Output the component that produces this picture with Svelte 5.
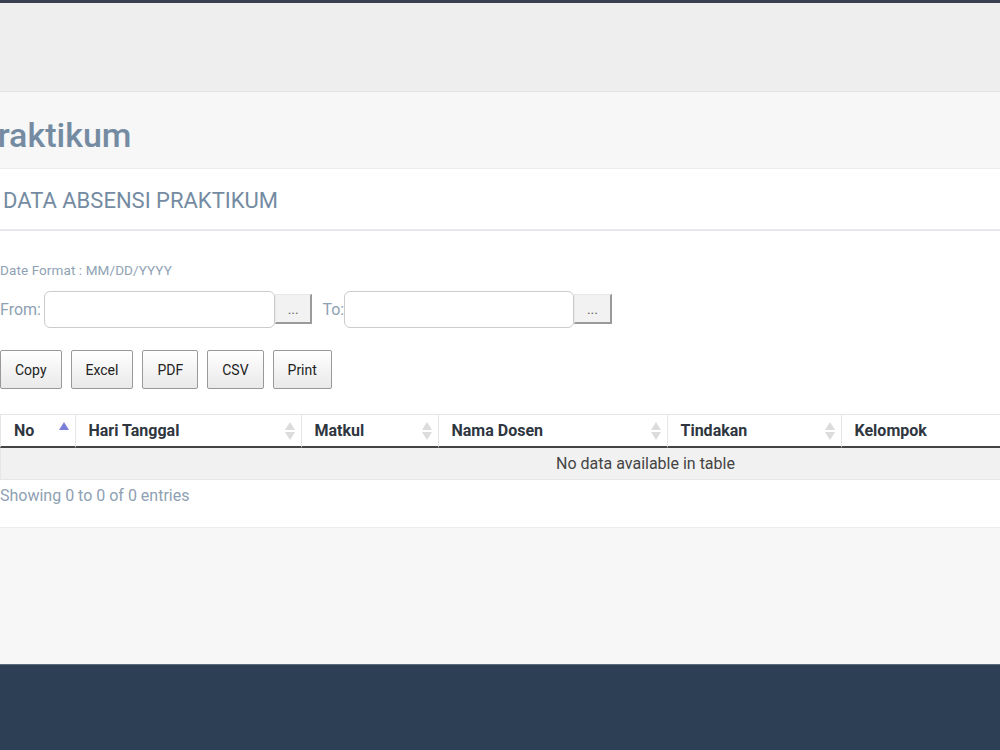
<script lang="ts">
  const columns = [
    { name: 'No', width: 75, sort: 'asc' },
    { name: 'Hari Tanggal', width: 226, sort: 'both' },
    { name: 'Matkul', width: 137, sort: 'both' },
    { name: 'Nama Dosen', width: 229, sort: 'both' },
    { name: 'Tindakan', width: 174, sort: 'both' },
    { name: 'Kelompok', width: 449, sort: 'both' }
  ];
  const exportButtons = ['Copy', 'Excel', 'PDF', 'CSV', 'Print'];
</script>

<div class="page">
  <div class="topbar"></div>
  <div class="header"></div>

  <div class="content">
    <div class="title-bar">
      <h1>Praktikum</h1>
    </div>

    <div class="card">
      <div class="card-head">DATA ABSENSI PRAKTIKUM</div>
      <div class="card-body">
        <p class="format">Date Format : MM/DD/YYYY</p>

        <div class="range">
          <label for="from">From:</label>
          <input id="from" type="text" />
          <button class="pick">...</button>
          <label class="to" for="to">To:</label>
          <input id="to" type="text" />
          <button class="pick">...</button>
        </div>

        <div class="exports">
          {#each exportButtons as label}
            <button class="export">{label}</button>
          {/each}
        </div>

        <table>
          <thead>
            <tr>
              {#each columns as col}
                <th style:width="{col.width}px">
                  {col.name}
                  <span class="sort">
                    <i class="up" class:active={col.sort === 'asc'}></i>
                    {#if col.sort === 'both'}<i class="down"></i>{/if}
                  </span>
                </th>
              {/each}
            </tr>
          </thead>
          <tbody>
            <tr>
              <td colspan="6">No data available in table</td>
            </tr>
          </tbody>
        </table>

        <div class="info">Showing 0 to 0 of 0 entries</div>
      </div>
    </div>
  </div>

  <div class="footer"></div>
</div>

<style>
  :global(body) {
    margin: 0;
    overflow: hidden;
    font-family: Roboto, "Liberation Sans", sans-serif;
  }
  .page {
    width: 1000px;
    height: 750px;
    display: flex;
    flex-direction: column;
    overflow: hidden;
    background: #f7f7f7;
  }
  .topbar {
    height: 3px;
    background: #3a3f51;
  }
  .header {
    height: 88px;
    background: #eeeeee;
    border-bottom: 1px solid #e2e2e4;
  }
  .content {
    flex: 1;
  }
  .title-bar {
    height: 76px;
    box-sizing: border-box;
    padding-top: 10px;
    display: flex;
    align-items: center;
    background: #f7f7f7;
  }
  h1 {
    margin: 0 0 0 -24px;
    font-size: 34px;
    font-weight: 500;
    color: #748ba2;
  }
  .card {
    background: #fff;
    border-top: 1px solid #e9edf0;
    border-bottom: 1px solid #e9edf0;
    height: 360px;
    box-sizing: border-box;
    overflow: hidden;
  }
  .card-head {
    height: 62px;
    box-sizing: border-box;
    padding: 19px 0 0 3px;
    font-size: 22px;
    line-height: 26px;
    color: #748ba2;
    border-bottom: 2px solid #e6e8ee;
  }
  .card-body {
    padding-top: 31px;
  }
  .format {
    margin: 0;
    font-size: 13.5px;
    line-height: 16px;
    letter-spacing: 0.1px;
    color: #8fa2b4;
  }
  .range {
    display: flex;
    align-items: center;
    margin-top: 12px;
    height: 38px;
    font-size: 16px;
    color: #8ea1b3;
  }
  .range label {
    margin-right: 3px;
  }
  .range .to {
    margin: 0;
    padding-left: 10px;
  }
  input {
    width: 231px;
    height: 37px;
    box-sizing: border-box;
    border: 1px solid #cfcaca;
    border-radius: 6px;
    background: #fff;
    padding: 0;
  }
  #to {
    width: 230px;
  }
  .pick {
    width: 37.5px;
    height: 30px;
    margin: 0;
    padding: 0;
    box-sizing: border-box;
    border: 1px solid;
    border-color: #e8e8e8 #9a9a9a #9a9a9a #e8e8e8;
    border-width: 1px 2px 2px 1px;
    background: #f2f2f2;
    font-family: inherit;
    font-size: 14px;
    color: #666;
  }
  .exports {
    display: flex;
    gap: 9px;
    margin-top: 22px;
  }
  .export {
    height: 39px;
    box-sizing: border-box;
    padding: 0 14px;
    border: 1px solid #999;
    border-radius: 2px;
    background: linear-gradient(to bottom, #ffffff, #e9e9e9);
    font-family: inherit;
    font-size: 14px;
    color: #222;
  }
  table {
    width: 1290px;
    table-layout: fixed;
    border-collapse: separate;
    border-spacing: 0;
    margin-top: 25px;
    font-size: 16px;
    color: #444;
  }
  th {
    position: relative;
    height: 34px;
    box-sizing: border-box;
    padding: 0 0 1px 12.5px;
    text-align: left;
    font-weight: 700;
    color: #2f3640;
    background: #fff;
    border-top: 1px solid #e6e6e6;
    border-left: 1px solid #e6e6e6;
    border-bottom: 2px solid #444;
  }
  th:first-child {
    padding-left: 13px;
  }
  .sort {
    position: absolute;
    right: 6px;
    top: 7px;
    display: flex;
    flex-direction: column;
    gap: 2px;
  }
  .sort i {
    display: block;
    width: 0;
    height: 0;
    border-left: 5.5px solid transparent;
    border-right: 5.5px solid transparent;
  }
  .up {
    border-bottom: 8px solid #dcdcdc;
  }
  .up.active {
    border-bottom-color: #7c7fd6;
  }
  .down {
    border-top: 8px solid #dcdcdc;
  }
  td {
    height: 32px;
    box-sizing: border-box;
    padding: 0;
    text-align: center;
    background: #f1f1f1;
    border-left: 1px solid #e6e6e6;
    border-bottom: 1px solid #e6e6e6;
  }
  .info {
    margin-top: 6px;
    font-size: 16px;
    line-height: 19px;
    color: #8ea1b3;
  }
  .footer {
    height: 86px;
    background: #2c3f55;
    border-top: 1px solid #5c6b7b;
    box-sizing: border-box;
  }
</style>
